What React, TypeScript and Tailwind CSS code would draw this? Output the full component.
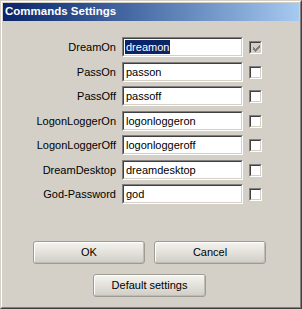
const fields = [
  { label: "DreamOn", value: "dreamon", selected: true, disabled: true, mt: "mt-0" },
  { label: "PassOn", value: "passon", mt: "mt-[5px]" },
  { label: "PassOff", value: "passoff", mt: "mt-[4px]" },
  { label: "LogonLoggerOn", value: "logonloggeron", mt: "mt-[5px]" },
  { label: "LogonLoggerOff", value: "logonloggeroff", mt: "mt-[4px]" },
  { label: "DreamDesktop", value: "dreamdesktop", mt: "mt-[5px]" },
  { label: "God-Password", value: "god", mt: "mt-[4px]" },
];

const font = "font-['Liberation_Sans',Arial,sans-serif]";

// classic 7x7 check mark, one column at a time
const checkCols = [2, 3, 4, 3, 2, 1, 0];

const Sunken = ({ className, children }: { className: string; children?: React.ReactNode }) => (
  <div className={`border border-t-[#808080] border-l-[#808080] border-r-white border-b-white ${className}`}>
    <div className="h-full w-full border border-t-[#404040] border-l-[#404040] border-r-[#d4d0c8] border-b-[#d4d0c8]">
      {children}
    </div>
  </div>
);

const Button = ({ label, className }: { label: string; className: string }) => (
  <button
    className={`${className} h-[23px] rounded-[3px] border border-[#9d9b92] bg-gradient-to-b from-[#f4f4f0] via-[#e3e1da] to-[#cfcdc5] text-[11px] text-black shadow-[inset_1px_1px_0_#ffffff,inset_-1px_-1px_0_#bebcb3]`}
  >
    {label}
  </button>
);

export default function App() {
  return (
    <div className={`w-[302px] h-[309px] border border-t-[#d4d0c8] border-l-[#d4d0c8] border-r-[#404040] border-b-[#404040] bg-[#d4d0c8] ${font}`}>
      <div className="h-full border border-t-white border-l-white border-r-[#808080] border-b-[#808080] p-px flex flex-col">
        <div className="h-[18px] bg-gradient-to-r from-[#0a246a] to-[#a6caf0] flex items-center pl-[2px]">
          <span className="text-white font-bold text-[11.5px] leading-none">Commands Settings</span>
        </div>

        <div className="pt-[16px] flex flex-col">
          {fields.map((f) => (
            <div key={f.label} className={`flex items-center h-[20px] ${f.mt}`}>
              <div className="w-[113px] text-right text-[11px] text-black">{f.label}</div>
              <Sunken className="ml-[6px] w-[121px] h-[20px] bg-white">
                <div className="h-full flex items-center pl-[1px] text-[11px] text-black bg-white">
                  <span className={f.selected ? "bg-[#0a246a] text-white px-[1px] leading-[14px]" : "px-[1px]"}>
                    {f.value}
                  </span>
                </div>
              </Sunken>
              <Sunken className={`ml-[6px] w-[13px] h-[13px] ${f.disabled ? "bg-[#d4d0c8]" : "bg-white"}`}>
                {f.disabled && (
                  <svg width="11" height="11" viewBox="0 0 11 11" className="block">
                    {checkCols.map((top, i) => (
                      <rect key={i} x={2 + i} y={2 + top} width="1" height="3" fill="#808080" />
                    ))}
                  </svg>
                )}
              </Sunken>
            </div>
          ))}
        </div>

        <div className="mt-[37px] flex pl-[30px] gap-[9px]">
          <Button label="OK" className="w-[112px]" />
          <Button label="Cancel" className="w-[112px]" />
        </div>
        <div className="mt-[10px] flex pl-[90px]">
          <Button label="Default settings" className="w-[113px]" />
        </div>
      </div>
    </div>
  );
}
